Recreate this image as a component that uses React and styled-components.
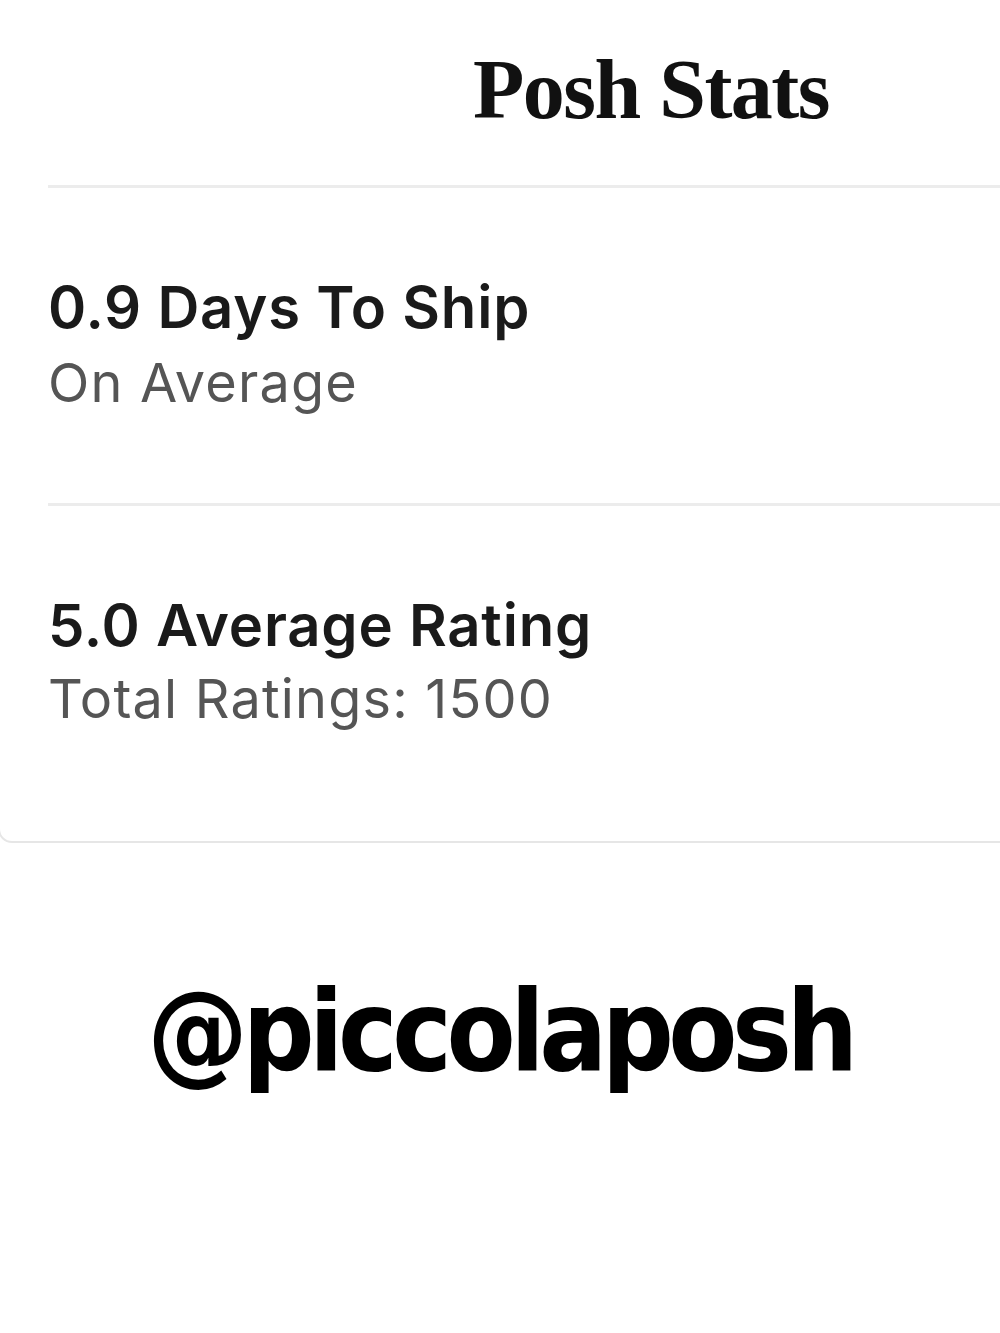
import React from "react";
import styled, {createGlobalStyle} from "styled-components";

const GlobalStyle = createGlobalStyle`
  html, body {
    margin: 0;
    padding: 0;
    background: #fff;
    overflow: hidden;
  }
  body {
    width: 1000px;
    height: 1333px;
  }
`

const Page = styled.div`
  width: 1000px;
  height: 1333px;
  overflow: hidden;
  display: flex;
  flex-direction: column;
  background: #fff;
`

const Card = styled.section`
  width: 1306px;
  margin-left: -2px;
  margin-top: -14px;
  padding-top: 14px;
  border: 2px solid #e6e6e6;
  border-radius: 14px;
  background: #fff;
  box-sizing: border-box;
  padding-bottom: 22px;
`

const Title = styled.h1`
  margin: 0;
  padding: 46px 0 53px;
  text-align: center;
  font-family: "Liberation Serif", "Times New Roman", serif;
  font-weight: 700;
  font-size: 84px;
  line-height: 1;
  letter-spacing: -1.5px;
  color: #111;
`

const Divider = styled.hr`
  margin: 0 0 0 48px;
  border: none;
  height: 3px;
  background: #ececec;
`

const StatRow = styled.div`
  display: flex;
  flex-direction: column;
  gap: ${p => p.$gap || 12}px;
  padding: 87px 48px 88px;
`

const StatValue = styled.div`
  font-family: Inter, "Liberation Sans", sans-serif;
  font-weight: 600;
  font-size: 58px;
  line-height: 64px;
  letter-spacing: 0.8px;
  color: #1a1a1a;
`

const StatNote = styled.div`
  font-family: Inter, "Liberation Sans", sans-serif;
  font-weight: 400;
  font-size: 54px;
  line-height: 64px;
  letter-spacing: 1.2px;
  color: #555;
`

const Handle = styled.div`
  margin-top: 132px;
  text-align: center;
  font-family: "DejaVu Sans Condensed", "DejaVu Sans", sans-serif;
  font-weight: 700;
  font-size: 112px;
  line-height: 1;
  letter-spacing: -5.5px;
  color: #000;
`

const stats = [
    {value: "0.9 Days To Ship", note: "On Average"},
    {value: "5.0 Average Rating", note: "Total Ratings: 1500"},
]

export default function App() {
    return (
        <>
            <GlobalStyle/>
            <Page>
                <Card>
                    <Title>Posh Stats</Title>
                    {stats.map((s, i) => (
                        <React.Fragment key={s.value}>
                            <Divider/>
                            <StatRow $gap={i === 0 ? 12 : 10}>
                                <StatValue>{s.value}</StatValue>
                                <StatNote>{s.note}</StatNote>
                            </StatRow>
                        </React.Fragment>
                    ))}
                </Card>
                <Handle>@piccolaposh</Handle>
            </Page>
        </>
    )
}
